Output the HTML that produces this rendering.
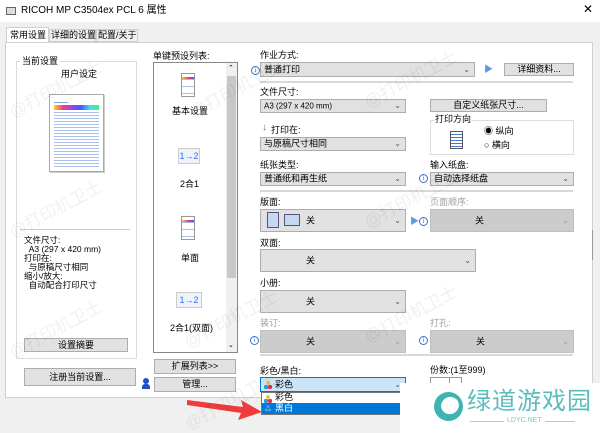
<!DOCTYPE html>
<html><head><meta charset="utf-8"><style>
*{box-sizing:border-box;margin:0;padding:0}
html,body{width:600px;height:433px;overflow:hidden}
body{position:relative;background:#f0f0f0;font-family:"Liberation Sans","Noto Sans CJK SC",sans-serif;font-size:9px;line-height:11px;color:#000}
.a{position:absolute;white-space:nowrap}
.sel{position:absolute;background:#e1e1e1;border:1px solid #adadad}
.sel.d{background:#cccccc;border-color:#bfbfbf}
.sel .t{position:absolute;left:3px;top:50%;transform:translateY(-50%);white-space:nowrap}
.sel .c{position:absolute;right:4px;top:50%;transform:translateY(-55%);font-size:8px;color:#555}
.btn{position:absolute;background:#e1e1e1;border:1px solid #adadad;text-align:center;white-space:nowrap}
.hr{position:absolute;height:2px;background:#d8d8d8}
.info{position:absolute;width:9px;height:9px;border:1px solid #3a6fd0;border-radius:50%;color:#3a6fd0;font-size:7px;line-height:7px;text-align:center;font-family:"Liberation Serif",serif}
.g{color:#a0a0a0}
.wm{position:absolute;color:rgba(0,0,0,0.06);font-size:17px;line-height:20px;transform:rotate(-28deg);white-space:nowrap}
</style></head><body>
<div class="a" style="left:0;top:0;width:600px;height:22px;background:#fff"></div>
<div class="a" style="left:6px;top:7px;width:10px;height:8px;border:1px solid #666;background:#ddd"></div>
<div class="a" style="left:21px;top:5px;font-size:10px">RICOH MP C3504ex PCL 6 属性</div>
<div class="a" style="left:583px;top:4px;font-size:12px">✕</div>
<div class="a" style="left:6px;top:27px;width:43px;height:16px;background:#fff;border:1px solid #d0d0d0;border-bottom:none"></div>
<div class="a" style="left:10px;top:30px">常用设置</div>
<div class="a" style="left:49px;top:29px;width:47px;height:13px;border:1px solid #d0d0d0;background:#f0f0f0"></div>
<div class="a" style="left:51px;top:30px">详细的设置</div>
<div class="a" style="left:96px;top:29px;width:42px;height:13px;border:1px solid #d0d0d0;background:#f0f0f0"></div>
<div class="a" style="left:98px;top:30px">配置/关于</div>
<div class="a" style="left:5px;top:42px;width:588px;height:356px;background:#fff;border:1px solid #d0d0d0"></div>
<div class="a" style="left:16px;top:61px;width:121px;height:298px;border:1px solid #dcdcdc"></div>
<div class="a" style="left:20px;top:56px;background:#fff;padding:0 2px">当前设置</div>
<div class="a" style="left:61px;top:69px">用户设定</div>
<div class="a" style="left:49px;top:94px;width:55px;height:78px;border:1px solid #aaa;background:#fff;box-shadow:1px 1px 0 #ccc"></div>
<div class="a" style="left:54px;top:102px;width:14px;height:1px;background:#8aa8e0"></div>
<div class="a" style="left:54px;top:105px;width:45px;height:5px;background:linear-gradient(90deg,#f9d030,#f04080,#a040f0,#4060f0,#40e0f0,#40f080)"></div>
<div class="a" style="left:54px;top:112px;width:45px;height:55px;background:repeating-linear-gradient(#a8c0ef 0 1px,transparent 1px 3px)"></div>
<div class="a" style="left:20px;top:229px;width:110px;height:1px;background:#ccc"></div>
<div class="a" style="left:24px;top:236px;line-height:9px;font-size:8.5px">文件尺寸:<br>&nbsp;&nbsp;A3 (297 x 420 mm)<br>打印在:<br>&nbsp;&nbsp;与原稿尺寸相同<br>缩小/放大:<br>&nbsp;&nbsp;自动配合打印尺寸</div>
<div class="btn" style="left:24px;top:338px;width:104px;height:14px;line-height:12px">设置摘要</div>
<div class="btn" style="left:24px;top:368px;width:112px;height:18px;line-height:16px">注册当前设置...</div>
<div class="a" style="left:153px;top:51px">单键预设列表:</div>
<div class="a" style="left:153px;top:62px;width:85px;height:291px;border:1px solid #888;background:#fff"></div>
<div class="a" style="left:226px;top:63px;width:11px;height:289px;background:#f0f0f0"></div>
<div class="a" style="left:227px;top:76px;width:9px;height:202px;background:#c8c8c8"></div>
<div class="a" style="left:228px;top:63px;font-size:7px">⌃</div>
<div class="a" style="left:228px;top:340px;font-size:7px">⌄</div>
<div class="a" style="left:181px;top:73px;width:14px;height:24px;border:1px solid #999;background:repeating-linear-gradient(#fff 0 5px,#a8c0ef 5px 6px,#fff 6px 7px)"></div>
<div class="a" style="left:182px;top:77px;width:12px;height:2px;background:linear-gradient(90deg,#f0d030,#f04080,#4060f0)"></div>
<div class="a" style="left:172px;top:106px">基本设置</div>
<div class="a" style="left:178px;top:148px;width:22px;height:16px;border:1px solid #ccc;background:#eef3fb;color:#2f6fe0;font-size:9px;text-align:center;line-height:14px">1→2</div>
<div class="a" style="left:180px;top:179px">2合1</div>
<div class="a" style="left:181px;top:216px;width:14px;height:24px;border:1px solid #999;background:repeating-linear-gradient(#fff 0 5px,#a8c0ef 5px 6px,#fff 6px 7px)"></div>
<div class="a" style="left:182px;top:220px;width:12px;height:2px;background:linear-gradient(90deg,#f0d030,#f04080,#4060f0)"></div>
<div class="a" style="left:181px;top:253px">单面</div>
<div class="a" style="left:176px;top:292px;width:26px;height:16px;border:1px solid #ccc;background:#eef3fb;color:#2f6fe0;font-size:9px;text-align:center;line-height:14px">1→2</div>
<div class="a" style="left:170px;top:323px">2合1(双面)</div>
<div class="btn" style="left:154px;top:359px;width:82px;height:15px;line-height:13px">扩展列表&gt;&gt;</div>
<div class="btn" style="left:154px;top:377px;width:82px;height:15px;line-height:13px">管理...</div>
<div class="a" style="left:143px;top:378px;width:6px;height:6px;border-radius:50%;background:#2050c8"></div>
<div class="a" style="left:142px;top:384px;width:8px;height:5px;background:#2050c8;border-radius:3px 3px 0 0"></div>
<div class="a" style="left:260px;top:50px">作业方式:</div>
<div class="info" style="left:251px;top:66px">i</div>
<div class="sel" style="left:260px;top:62px;width:215px;height:15px"><span class="t">普通打印</span><span class="c">⌄</span></div>
<div class="a" style="left:484px;top:64px;color:#5a9ae0;font-size:9px">▶</div>
<div class="btn" style="left:504px;top:63px;width:70px;height:13px;line-height:11px">详细资料...</div>
<div class="hr" style="left:260px;top:81px;width:313px"></div>
<div class="a" style="left:260px;top:87px">文件尺寸:</div>
<div class="sel" style="left:260px;top:99px;width:146px;height:14px"><span class="t" style="font-size:8px">A3 (297 x 420 mm)</span><span class="c">⌄</span></div>
<div class="btn" style="left:430px;top:99px;width:117px;height:13px;line-height:11px">自定义纸张尺寸...</div>
<div class="a" style="left:262px;top:122px;color:#3a7ad0;font-size:10px">↓</div>
<div class="a" style="left:271px;top:125px">打印在:</div>
<div class="sel" style="left:260px;top:137px;width:146px;height:14px"><span class="t">与原稿尺寸相同</span><span class="c">⌄</span></div>
<div class="a" style="left:430px;top:120px;width:144px;height:35px;border:1px solid #dcdcdc"></div>
<div class="a" style="left:434px;top:114px;background:#fff;padding:0 1px">打印方向</div>
<div class="a" style="left:450px;top:131px;width:13px;height:18px;border:1px solid #556;background:repeating-linear-gradient(#fff 0 2px,#4a78d0 2px 3px)"></div>
<div class="a" style="left:484px;top:126px">◉ 纵向</div>
<div class="a" style="left:484px;top:140px">○ 横向</div>
<div class="a" style="left:260px;top:160px">纸张类型:</div>
<div class="sel" style="left:260px;top:172px;width:146px;height:14px"><span class="t">普通纸和再生纸</span><span class="c">⌄</span></div>
<div class="a" style="left:430px;top:160px">输入纸盘:</div>
<div class="info" style="left:419px;top:174px">i</div>
<div class="sel" style="left:430px;top:172px;width:144px;height:14px"><span class="t">自动选择纸盘</span><span class="c">⌄</span></div>
<div class="hr" style="left:260px;top:190px;width:313px"></div>
<div class="a" style="left:260px;top:197px">版面:</div>
<div class="sel" style="left:260px;top:209px;width:146px;height:23px"><span class="t" style="left:45px">关</span><span class="c">⌄</span></div>
<div class="a" style="left:267px;top:212px;width:12px;height:16px;border:1px solid #557;background:#c5d8f0"></div>
<div class="a" style="left:284px;top:214px;width:16px;height:12px;border:1px solid #557;background:#c5d8f0"></div>
<div class="a" style="left:410px;top:216px;color:#5a9ae0">▶</div>
<div class="info" style="left:419px;top:217px">i</div>
<div class="a g" style="left:430px;top:197px">页面顺序:</div>
<div class="sel d" style="left:430px;top:209px;width:144px;height:23px"><span class="t" style="left:44px">关</span><span class="c" style="color:#999">⌄</span></div>
<div class="a" style="left:260px;top:238px">双面:</div>
<div class="sel" style="left:260px;top:249px;width:216px;height:23px"><span class="t" style="left:45px">关</span><span class="c">⌄</span></div>
<div class="a" style="left:260px;top:278px">小册:</div>
<div class="sel" style="left:260px;top:290px;width:146px;height:23px"><span class="t" style="left:45px">关</span><span class="c">⌄</span></div>
<div class="a g" style="left:260px;top:318px">装订:</div>
<div class="info" style="left:250px;top:336px">i</div>
<div class="sel d" style="left:260px;top:330px;width:146px;height:23px"><span class="t" style="left:45px">关</span><span class="c" style="color:#999">⌄</span></div>
<div class="a g" style="left:430px;top:318px">打孔:</div>
<div class="info" style="left:419px;top:336px">i</div>
<div class="sel d" style="left:430px;top:330px;width:144px;height:23px"><span class="t" style="left:45px">关</span><span class="c" style="color:#999">⌄</span></div>
<div class="hr" style="left:260px;top:354px;width:313px"></div>
<div class="a" style="left:260px;top:366px">彩色/黑白:</div>
<div class="sel" style="left:260px;top:377px;width:146px;height:15px;background:#cce4f7;border-color:#0078d7"><span class="t" style="left:14px">彩色</span><span class="c">⌄</span></div>
<div class="a" style="left:264px;top:381px;width:8px;height:8px;background:radial-gradient(circle at 50% 25%,#f0c020 25%,transparent 27%),radial-gradient(circle at 25% 75%,#20a0e0 25%,transparent 27%),radial-gradient(circle at 75% 75%,#e03060 25%,transparent 27%)"></div>
<div class="a" style="left:261px;top:392px;width:140px;height:23px;background:#fff;border:1px solid #777"></div>
<div class="a" style="left:264px;top:395px;width:8px;height:8px;background:radial-gradient(circle at 50% 25%,#f0c020 25%,transparent 27%),radial-gradient(circle at 25% 75%,#20a0e0 25%,transparent 27%),radial-gradient(circle at 75% 75%,#e03060 25%,transparent 27%)"></div>
<div class="a" style="left:275px;top:392px">彩色</div>
<div class="a" style="left:262px;top:403px;width:138px;height:11px;background:#0078d7"></div>
<div class="a" style="left:264px;top:403px;color:#bcd;font-size:8px">⁂</div>
<div class="a" style="left:275px;top:403px;color:#fff">黑白</div>
<div class="a" style="left:430px;top:365px">份数:(1至999)</div>
<div class="a" style="left:430px;top:377px;width:32px;height:8px;border:1px solid #999;border-bottom:none;background:#fff"></div>
<div class="a" style="left:449px;top:377px;width:1px;height:8px;background:#999"></div>
<div class="a" style="left:592px;top:230px;width:1px;height:30px;background:#999"></div>
<svg class="a" style="left:185px;top:392px" width="80" height="30" viewBox="0 0 80 30"><polygon points="2,8 58,15 56,8 77,20 53,28 56,21 2,13" fill="#ee3b3b"/></svg>
<div class="a" style="left:400px;top:383px;width:200px;height:50px;background:#fff"></div>
<div class="a" style="left:434px;top:392px;width:29px;height:29px;border-radius:50%;background:#3fb3b3"></div>
<div class="a" style="left:441px;top:397px;width:18px;height:17px;border-radius:50%;background:#fff;transform:rotate(-25deg)"></div>
<div class="a" style="left:467px;top:388px;font-size:24px;line-height:28px;color:#5bbcbc;letter-spacing:1px">绿道游戏园</div>
<div class="a" style="left:470px;top:421px;width:105px;height:1px;background:#9fd6d6"></div>
<div class="a" style="left:504px;top:416px;font-size:7px;line-height:9px;color:#7cc;background:#fff;padding:0 3px">LDYC.NET</div>
<div class="wm" style="left:5px;top:80px">@打印机卫士</div>
<div class="wm" style="left:185px;top:80px">@打印机卫士</div>
<div class="wm" style="left:360px;top:70px">@打印机卫士</div>
<div class="wm" style="left:5px;top:200px">@打印机卫士</div>
<div class="wm" style="left:360px;top:190px">@打印机卫士</div>
<div class="wm" style="left:5px;top:320px">@打印机卫士</div>
<div class="wm" style="left:180px;top:310px">@打印机卫士</div>
<div class="wm" style="left:360px;top:305px">@打印机卫士</div>
<div class="wm" style="left:180px;top:392px">@打印机卫士</div>
</body></html>
